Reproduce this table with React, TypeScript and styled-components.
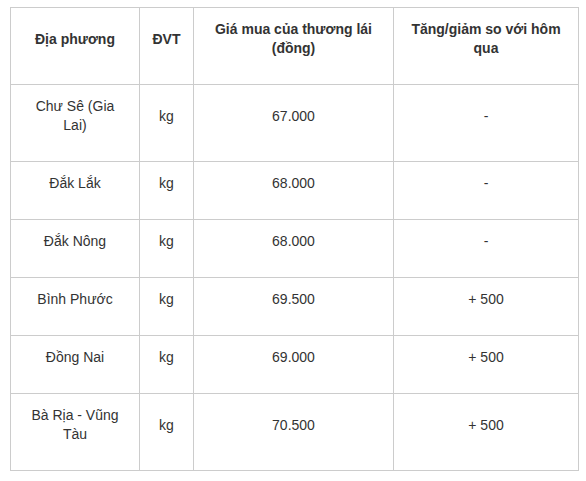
import * as React from 'react'
import styled, { createGlobalStyle } from 'styled-components'

const GlobalStyle = createGlobalStyle`
	html, body {
		margin: 0;
		padding: 0;
		background: #ffffff;
	}
	body {
		font-family: 'Liberation Sans', Arial, sans-serif;
		color: #333333;
	}
`

const Page = styled.div`
	padding: 7px 0 0 10px;
`

const Table = styled.table`
	width: 568px;
	border-collapse: collapse;
	table-layout: fixed;
	font-size: 14px;
	line-height: 19px;
`

const Cell = styled.td<{ $head?: boolean }>`
	border: 1px solid #cccccc;
	padding: 12px 12px 26px;
	text-align: center;
	vertical-align: middle;
	font-weight: ${(p) => (p.$head ? 700 : 400)};
	color: #333333;
`

const columns = [129, 54, 200, 185]

const header = ['Địa phương', 'ĐVT', 'Giá mua của thương lái (đồng)', 'Tăng/giảm so với hôm qua']

const rows = [
	['Chư Sê (Gia Lai)', 'kg', '67.000', '-'],
	['Đắk Lắk', 'kg', '68.000', '-'],
	['Đắk Nông', 'kg', '68.000', '-'],
	['Bình Phước', 'kg', '69.500', '+ 500'],
	['Đồng Nai', 'kg', '69.000', '+ 500'],
	['Bà Rịa - Vũng Tàu', 'kg', '70.500', '+ 500'],
]

export default function App() {
	return (
		<>
			<GlobalStyle />
			<Page>
				<Table>
					<colgroup>
						{columns.map((w, i) => (
							<col key={i} style={{ width: w }} />
						))}
					</colgroup>
					<tbody>
						<tr>
							{header.map((h) => (
								<Cell key={h} $head>
									{h}
								</Cell>
							))}
						</tr>
						{rows.map((r) => (
							<tr key={r[0]}>
								{r.map((c, i) => (
									<Cell key={i}>{c}</Cell>
								))}
							</tr>
						))}
					</tbody>
				</Table>
			</Page>
		</>
	)
}
